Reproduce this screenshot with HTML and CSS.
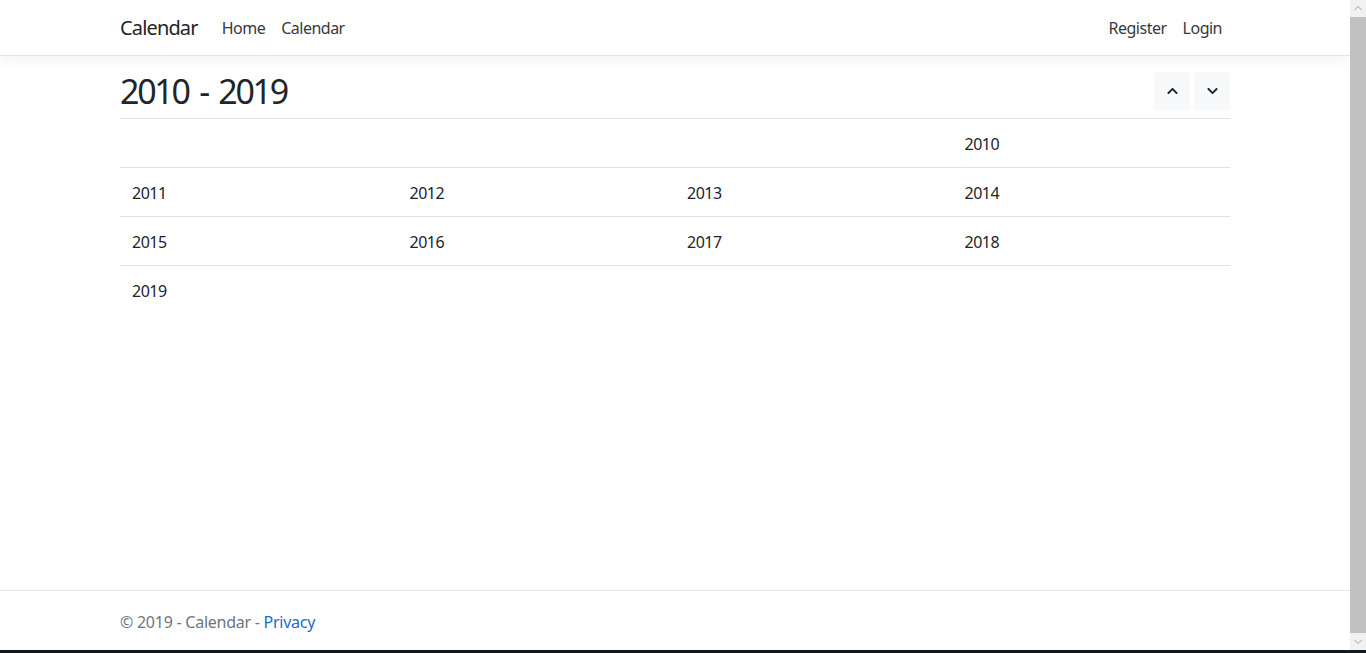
FILE: index.html
```html
<!DOCTYPE html>
<html lang="en">
<head>
<meta charset="utf-8">
<title>Calendar</title>
<link rel="stylesheet" href="styles.css">
</head>
<body>
<div class="screen">
  <div class="page">
    <header class="navbar">
      <div class="container nav-inner">
        <a class="brand" href="#">Calendar</a>
        <ul class="nav">
          <li><a class="nav-link" href="#">Home</a></li>
          <li><a class="nav-link" href="#">Calendar</a></li>
        </ul>
        <ul class="nav nav-right">
          <li><a class="nav-link" href="#">Register</a></li>
          <li><a class="nav-link" href="#">Login</a></li>
        </ul>
      </div>
    </header>
    <main class="container main">
      <div class="title-bar">
        <h2 class="title">2010 - 2019</h2>
        <div class="btns">
          <button class="btn" type="button" aria-label="Previous">
            <svg viewBox="0 0 448 512" width="11" height="12"><path fill="currentColor" d="M240.97 130.34l194.34 194.34c9.37 9.37 9.37 24.57 0 33.94l-22.67 22.67c-9.36 9.36-24.52 9.38-33.91 0.04L224 227.91 69.27 381.33c-9.39 9.34-24.55 9.32-33.91-0.04l-22.67-22.67c-9.37-9.37-9.37-24.57 0-33.94L207.03 130.34c9.37-9.37 24.57-9.37 33.94 0z"/></svg>
          </button>
          <button class="btn" type="button" aria-label="Next">
            <svg viewBox="0 0 448 512" width="11" height="12"><path fill="currentColor" d="M207.03 381.66L12.69 187.32c-9.37-9.37-9.37-24.57 0-33.94l22.67-22.67c9.36-9.36 24.52-9.38 33.91-0.04L224 284.09l154.73-153.42c9.39-9.34 24.55-9.32 33.91 0.04l22.67 22.67c9.37 9.37 9.37 24.57 0 33.94L240.97 381.66c-9.37 9.37-24.57 9.37-33.94 0z"/></svg>
          </button>
        </div>
      </div>
      <table class="years">
        <tbody>
          <tr><td></td><td></td><td></td><td>2010</td></tr>
          <tr><td>2011</td><td>2012</td><td>2013</td><td>2014</td></tr>
          <tr><td>2015</td><td>2016</td><td>2017</td><td>2018</td></tr>
          <tr><td>2019</td><td></td><td></td><td></td></tr>
        </tbody>
      </table>
    </main>
    <footer class="footer">
      <div class="container">&copy; 2019 - Calendar - <a href="#" class="link">Privacy</a></div>
    </footer>
  </div>
  <div class="scrollbar">
    <div class="sb-arrow">
      <svg viewBox="0 0 16 17" width="16" height="17"><path d="M4.5 10 L8 6.5 L11.5 10" fill="none" stroke="#a3a3a3" stroke-width="1"/></svg>
    </div>
    <div class="sb-thumb"></div>
    <div class="sb-arrow">
      <svg viewBox="0 0 16 17" width="16" height="17"><path d="M4.5 7 L8 10.5 L11.5 7" fill="none" stroke="#a3a3a3" stroke-width="1"/></svg>
    </div>
  </div>
</div>
<div class="taskbar"></div>
</body>
</html>
```

FILE: styles.css
```css
* { box-sizing: border-box; }
html, body { margin: 0; padding: 0; }
body {
  height: 653px;
  overflow: hidden;
  font-family: "Noto Sans", "Open Sans", "Liberation Sans", sans-serif;
  font-size: 16px;
  line-height: 1.5;
  letter-spacing: -0.5px;
  color: #212529;
  background: #fff;
  display: flex;
  flex-direction: column;
}
.screen {
  height: 650px;
  display: flex;
}
.page {
  flex: 1;
  display: flex;
  flex-direction: column;
  min-width: 0;
}
.container {
  width: 1140px;
  margin: 0 auto;
  padding: 0 15px;
}
.navbar {
  height: 56px;
  border-bottom: 1px solid #e5e5e5;
  box-shadow: 0 4px 12px rgba(0,0,0,0.05);
  background: #fff;
  padding: 8px 0;
}
.nav-inner {
  display: flex;
  align-items: center;
  height: 40px;
}
.brand {
  font-size: 20px;
  line-height: 30px;
  color: #212529;
  text-decoration: none;
  margin-right: 16px;
  letter-spacing: -0.85px;
}
.nav {
  list-style: none;
  margin: 0;
  padding: 0;
  display: flex;
}
.nav-right { margin-left: auto; }
.nav-link {
  display: block;
  padding: 8px;
  color: #343a40;
  text-decoration: none;
}
.main {
  flex: 1;
  padding-top: 16px;
}
.title-bar {
  display: flex;
  justify-content: space-between;
  align-items: flex-start;
  padding-bottom: 8px;
  border-bottom: 1px solid #dee2e6;
}
.title {
  margin: 0;
  font-size: 34px;
  font-weight: 400;
  line-height: 38px;
  letter-spacing: -2.3px;
  word-spacing: 4px;
  color: #212529;
}
.btns { display: flex; gap: 4px; }
.btn {
  width: 36px;
  height: 38px;
  border: 0;
  border-radius: 4px;
  background: #f8f9fa;
  color: #212529;
  display: flex;
  align-items: center;
  justify-content: center;
  padding: 0;
}
.years {
  width: 100%;
  border-collapse: separate;
  border-spacing: 0;
  table-layout: fixed;
}
.years td {
  padding: 13px 12px 11px;
  line-height: 24px;
  border-top: 1px solid #dee2e6;
  color: #212529;
  vertical-align: top;
}
.years tr:first-child td { border-top: 0; }
.footer {
  border-top: 1px solid #e5e5e5;
  padding-top: 3px;
  line-height: 56px;
  color: #6c757d;
  white-space: nowrap;
  letter-spacing: -0.25px;
}
.link { color: #1b6ec2; text-decoration: none; }
.scrollbar {
  width: 16px;
  background: #f1f1f1;
  display: flex;
  flex-direction: column;
}
.sb-arrow { height: 17px; }
.sb-arrow svg { display: block; }
.sb-thumb {
  flex: 1;
  background: #c1c1c1;
}
.taskbar {
  height: 3px;
  background: #0f1b20;
}
```
